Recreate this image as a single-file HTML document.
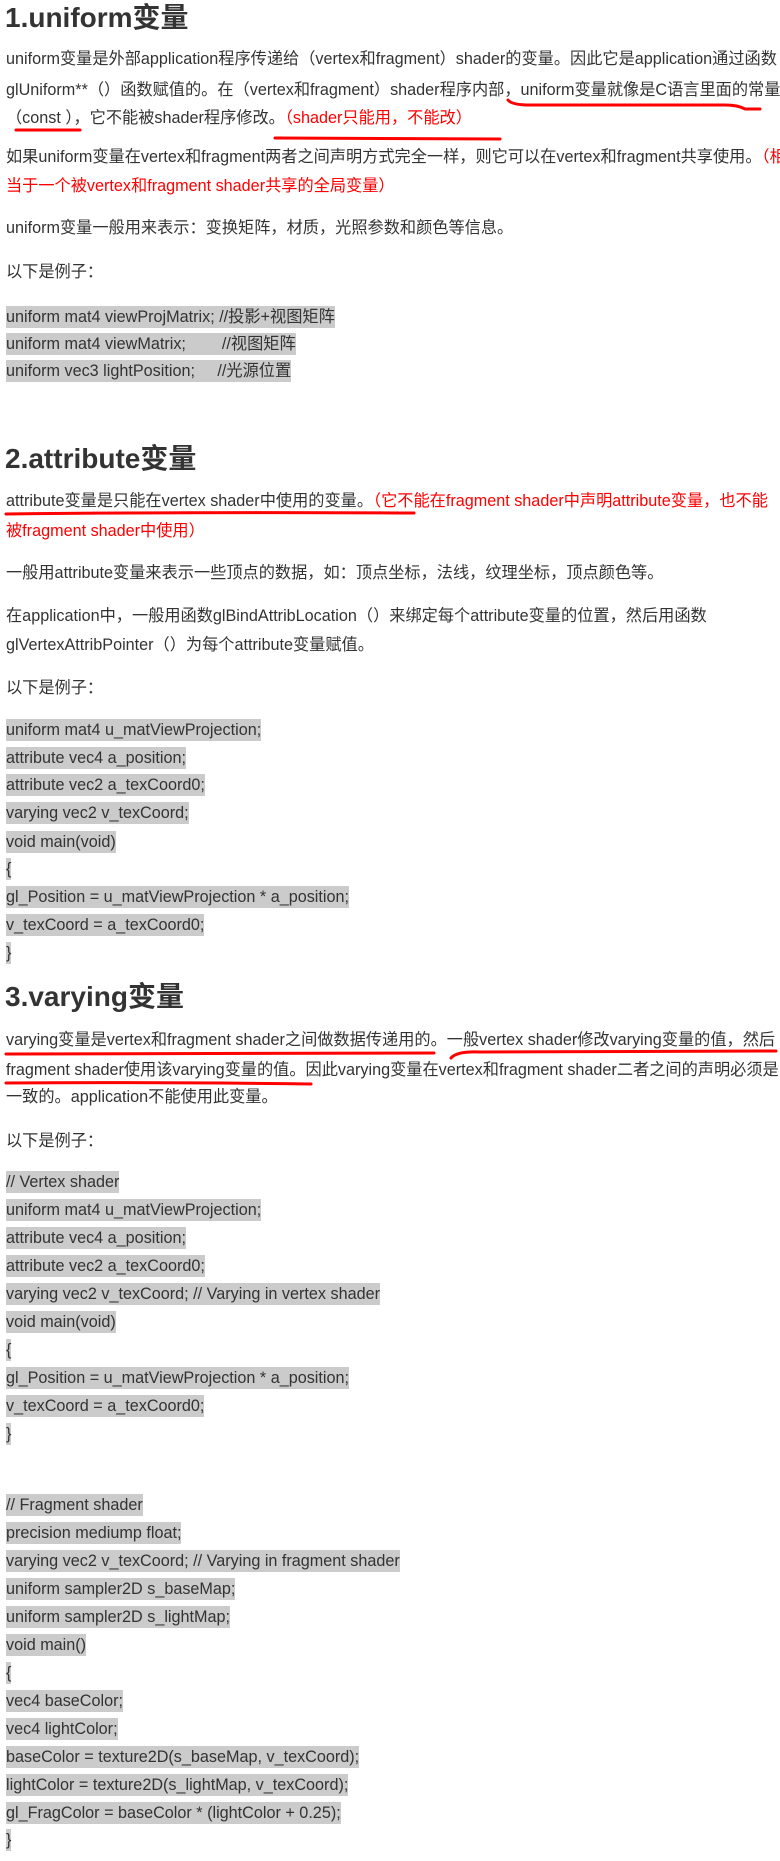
<!DOCTYPE html>
<html><head><meta charset="utf-8">
<style>
body{margin:0;background:#fff;width:780px;height:1861px;position:relative;overflow:hidden;font-family:"Liberation Sans","Noto Sans CJK SC",sans-serif;color:#333;}
.l{position:absolute;left:6px;height:28px;line-height:28px;font-size:16.2px;white-space:nowrap;letter-spacing:0}
.h{position:absolute;left:5px;height:36px;line-height:36px;font-size:28px;font-weight:bold;white-space:nowrap;color:#333}
.c{background:#cbcbcb;padding:2px 0}
.r{color:#f00}
svg{position:absolute;left:0;top:0}
</style></head><body>
<div class="h" style="top:0px">1.uniform变量</div>
<div class="l" style="top:45px">uniform变量是外部application程序传递给（vertex和fragment）shader的变量。因此它是application通过函数</div>
<div class="l" style="top:76px">glUniform**（）函数赋值的。在（vertex和fragment）shader程序内部，uniform变量就像是C语言里面的常量</div>
<div class="l" style="top:104px">（const ），它不能被shader程序修改。<span class="r">（shader只能用，不能改）</span></div>
<div class="l" style="top:143px">如果uniform变量在vertex和fragment两者之间声明方式完全一样，则它可以在vertex和fragment共享使用。<span class="r">（相</span></div>
<div class="l r" style="top:172px">当于一个被vertex和fragment shader共享的全局变量）</div>
<div class="l" style="top:214px">uniform变量一般用来表示：变换矩阵，材质，光照参数和颜色等信息。</div>
<div class="l" style="top:258px">以下是例子：</div>
<div class="l" style="top:303px"><span class="c">uniform mat4 viewProjMatrix; //投影+视图矩阵</span></div>
<div class="l" style="top:330px"><span class="c">uniform mat4 viewMatrix;&nbsp;&nbsp;&nbsp;&nbsp;&nbsp;&nbsp;&nbsp; //视图矩阵</span></div>
<div class="l" style="top:357px"><span class="c">uniform vec3 lightPosition;&nbsp;&nbsp;&nbsp;&nbsp; //光源位置</span></div>

<div class="h" style="top:441px">2.attribute变量</div>
<div class="l" style="top:487px">attribute变量是只能在vertex shader中使用的变量。<span class="r">（它不能在fragment shader中声明attribute变量，也不能</span></div>
<div class="l r" style="top:517px">被fragment shader中使用）</div>
<div class="l" style="top:559px">一般用attribute变量来表示一些顶点的数据，如：顶点坐标，法线，纹理坐标，顶点颜色等。</div>
<div class="l" style="top:602px">在application中，一般用函数glBindAttribLocation（）来绑定每个attribute变量的位置，然后用函数</div>
<div class="l" style="top:631px">glVertexAttribPointer（）为每个attribute变量赋值。</div>
<div class="l" style="top:674px">以下是例子：</div>
<div class="l" style="top:716px"><span class="c">uniform mat4 u_matViewProjection;</span></div>
<div class="l" style="top:744px"><span class="c">attribute vec4 a_position;</span></div>
<div class="l" style="top:771px"><span class="c">attribute vec2 a_texCoord0;</span></div>
<div class="l" style="top:799px"><span class="c">varying vec2 v_texCoord;</span></div>
<div class="l" style="top:828px"><span class="c">void main(void)</span></div>
<div class="l" style="top:855px"><span class="c">{</span></div>
<div class="l" style="top:883px"><span class="c">gl_Position = u_matViewProjection * a_position;</span></div>
<div class="l" style="top:911px"><span class="c">v_texCoord = a_texCoord0;</span></div>
<div class="l" style="top:939px"><span class="c">}</span></div>

<div class="h" style="top:979px">3.varying变量</div>
<div class="l" style="top:1026px">varying变量是vertex和fragment shader之间做数据传递用的。一般vertex shader修改varying变量的值，然后</div>
<div class="l" style="top:1056px">fragment shader使用该varying变量的值。因此varying变量在vertex和fragment shader二者之间的声明必须是</div>
<div class="l" style="top:1083px">一致的。application不能使用此变量。</div>
<div class="l" style="top:1127px">以下是例子：</div>
<div class="l" style="top:1168px"><span class="c">// Vertex shader</span></div>
<div class="l" style="top:1196px"><span class="c">uniform mat4 u_matViewProjection;</span></div>
<div class="l" style="top:1224px"><span class="c">attribute vec4 a_position;</span></div>
<div class="l" style="top:1252px"><span class="c">attribute vec2 a_texCoord0;</span></div>
<div class="l" style="top:1280px"><span class="c">varying vec2 v_texCoord; // Varying in vertex shader</span></div>
<div class="l" style="top:1308px"><span class="c">void main(void)</span></div>
<div class="l" style="top:1336px"><span class="c">{</span></div>
<div class="l" style="top:1364px"><span class="c">gl_Position = u_matViewProjection * a_position;</span></div>
<div class="l" style="top:1392px"><span class="c">v_texCoord = a_texCoord0;</span></div>
<div class="l" style="top:1420px"><span class="c">}</span></div>

<div class="l" style="top:1491px"><span class="c">// Fragment shader</span></div>
<div class="l" style="top:1519px"><span class="c">precision mediump float;</span></div>
<div class="l" style="top:1547px"><span class="c">varying vec2 v_texCoord; // Varying in fragment shader</span></div>
<div class="l" style="top:1575px"><span class="c">uniform sampler2D s_baseMap;</span></div>
<div class="l" style="top:1603px"><span class="c">uniform sampler2D s_lightMap;</span></div>
<div class="l" style="top:1631px"><span class="c">void main()</span></div>
<div class="l" style="top:1659px"><span class="c">{</span></div>
<div class="l" style="top:1687px"><span class="c">vec4 baseColor;</span></div>
<div class="l" style="top:1715px"><span class="c">vec4 lightColor;</span></div>
<div class="l" style="top:1743px"><span class="c">baseColor = texture2D(s_baseMap, v_texCoord);</span></div>
<div class="l" style="top:1771px"><span class="c">lightColor = texture2D(s_lightMap, v_texCoord);</span></div>
<div class="l" style="top:1799px"><span class="c">gl_FragColor = baseColor * (lightColor + 0.25);</span></div>
<div class="l" style="top:1826px"><span class="c">}</span></div>

<svg width="780" height="1861" viewBox="0 0 780 1861">
<g fill="none" stroke="#f00" stroke-width="3" stroke-linecap="round">
<path d="M508 100 Q512 105 530 105 L725 105 Q738 105 745 109 L760 109"/>
<path d="M16 130 L80 130"/>
<path d="M275 138 L500 139"/>
<path d="M6 514 Q200 512 414 513"/>
<path d="M6 1054 Q200 1053 434 1053"/>
<path d="M451 1058 Q457 1051 480 1052 L776 1051"/>
<path d="M6 1083 Q150 1082 311 1084"/>
</g>
</svg>
</body></html>
